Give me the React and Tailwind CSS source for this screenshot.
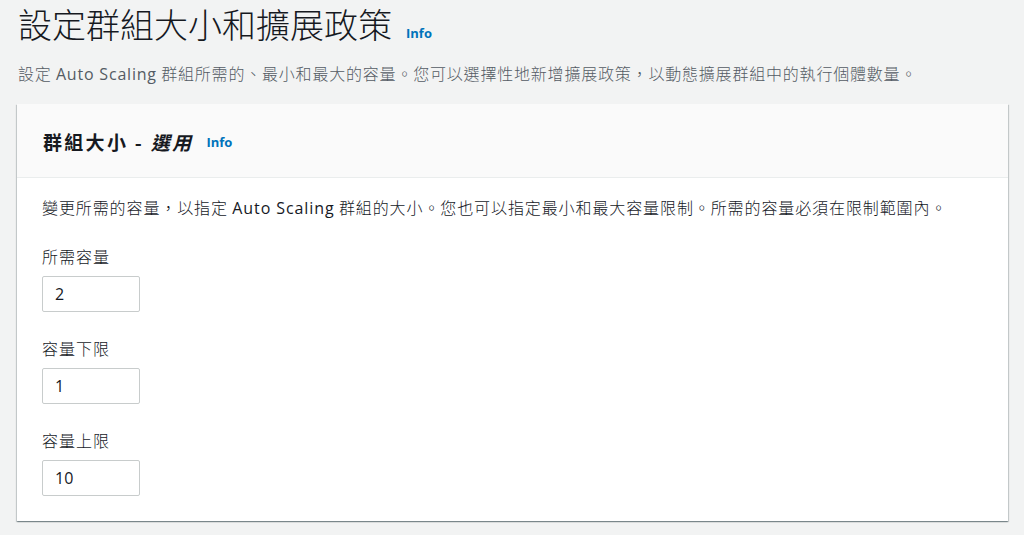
export default function App() {
  const font = "font-['Open_Sans','Noto_Sans_CJK_TC',sans-serif]";
  const cjk = "font-['Noto_Sans_CJK_TC',sans-serif]";
  const fields = [
    { label: "所需容量", value: "2" },
    { label: "容量下限", value: "1" },
    { label: "容量上限", value: "10" },
  ];
  return (
    <div lang="zh-Hant-TW" className={`w-full h-[535px] overflow-hidden bg-[#f2f3f3] ${font}`}>
      <div className="pl-[18px] pt-[4px] flex items-baseline gap-[14px]">
        <h1 className={`text-[34px] leading-[40px] font-light text-[#16191f] ${cjk}`}>設定群組大小和擴展政策</h1>
        <span className="text-[13px] font-bold text-[#0073bb]">Info</span>
      </div>
      <p className={`pl-[18px] mt-[18px] h-[22px] text-[16px] leading-[22px] tracking-[0.8px] font-light text-[#545b64] ${cjk}`}>
        設定 <span className="font-['Open_Sans'] font-normal">Auto Scaling</span> 群組所需的、最小和最大的容量。您可以選擇性地新增擴展政策，以動態擴展群組中的執行個體數量。
      </p>
      <div className="ml-[17px] mr-[16px] mt-[20px] bg-white shadow-[0_1px_1px_0_rgba(0,28,36,0.3),1px_1px_1px_0_rgba(0,28,36,0.15),-1px_1px_1px_0_rgba(0,28,36,0.15)]">
        <div className="h-[74px] bg-[#fafafa] border-b border-[#eaeded] px-[26px] pt-[3px] flex items-center gap-[13px]">
          <h2 className={`text-[19px] font-semibold tracking-[2.3px] text-[#16191f] ${cjk}`}>
            群組大小 - <i>選用</i>
          </h2>
          <span className="text-[13px] font-bold text-[#0073bb] mt-[2px]">Info</span>
        </div>
        <div className="px-[25px] pt-[18px] pb-[25px]">
          <p className={`h-[22px] text-[16px] leading-[22px] tracking-[0.9px] font-light text-[#16191f] ${cjk}`}>
            變更所需的容量，以指定 <span className="font-['Open_Sans'] font-normal">Auto Scaling</span> 群組的大小。您也可以指定最小和最大容量限制。所需的容量必須在限制範圍內。
          </p>
          <div className="mt-[27px] flex flex-col gap-[25px]">
            {fields.map((f) => (
              <div key={f.label} className="flex flex-col gap-[9px]">
                <label className={`h-[22px] text-[16px] leading-[22px] tracking-[1px] font-light text-[#16191f] ${cjk}`}>{f.label}</label>
                <div className="w-[98px] h-[36px] border border-[#c8cccc] rounded-[2px] flex items-center px-[12px] text-[16px] text-[#16191f] bg-white">
                  {f.value}
                </div>
              </div>
            ))}
          </div>
        </div>
      </div>
    </div>
  );
}
